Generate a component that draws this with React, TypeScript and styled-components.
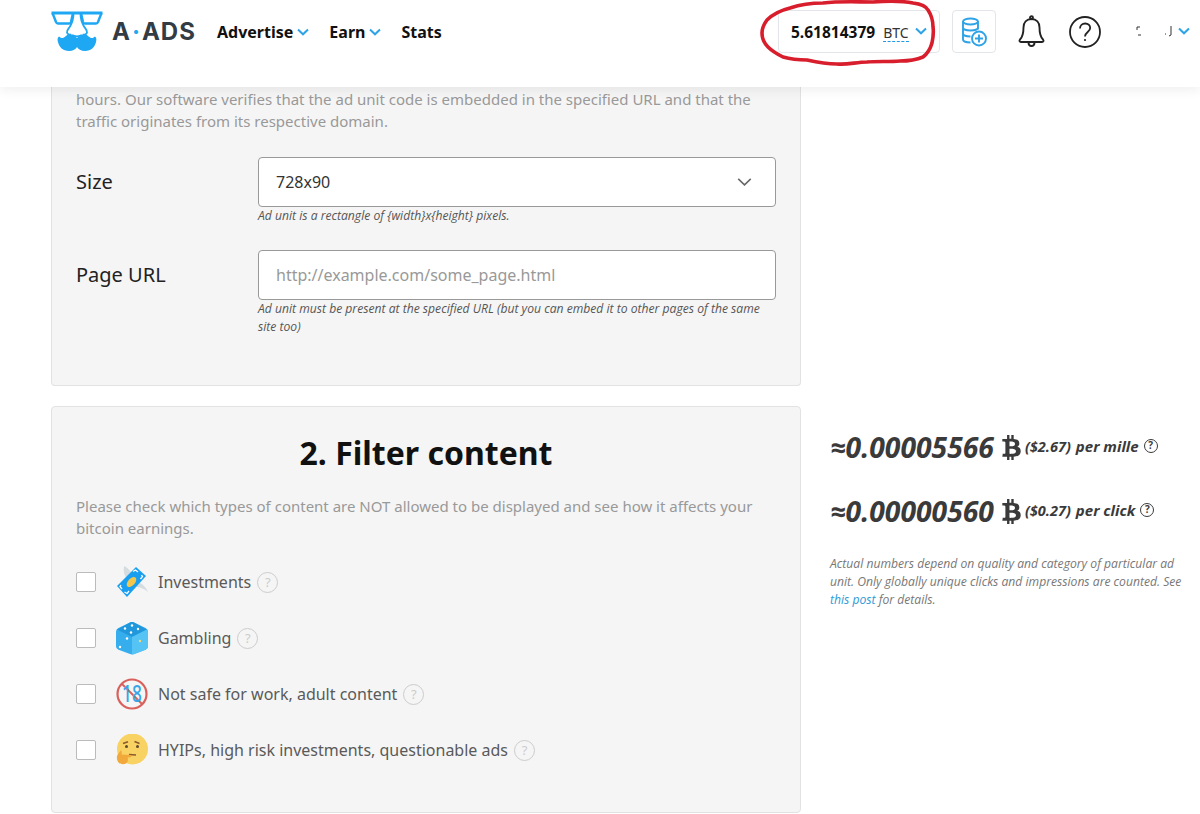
import React from "react";
import styled, { createGlobalStyle } from "styled-components";
import { FaBtc } from "react-icons/fa";

const Global = createGlobalStyle`
  html, body { margin: 0; padding: 0; background: #fff; }
  body { width: 1200px; height: 814px; overflow: hidden; font-family: "Noto Sans", "Open Sans", sans-serif; color: #222; }
  * { box-sizing: border-box; }
`;

const Header = styled.header`
  position: relative;
  z-index: 2;
  height: 87px;
  background: #fff;
  box-shadow: 0 2px 12px rgba(0, 0, 0, 0.08);
  display: flex;
  align-items: flex-start;
  padding: 10px 0 0 51px;
`;
const Logo = styled.a`
  display: flex;
  align-items: center;
  width: 166px;
  height: 42px;
  gap: 9px;
`;
const LogoText = styled.span`
  font-family: "Inter", sans-serif;
  font-weight: 700;
  font-size: 24px;
  letter-spacing: 1px;
  color: #333c44;
  white-space: nowrap;
  b { color: #1ea7f2; font-weight: 700; margin: 0 1px; }
`;
const Nav = styled.nav`
  display: flex;
  align-items: center;
  height: 44px;
  gap: 20px;
`;
const NavItem = styled.a`
  display: flex;
  align-items: center;
  gap: 4px;
  font-size: 16px;
  font-weight: 700;
  color: #111;
`;
const Right = styled.div`
  margin-left: auto;
  display: flex;
  align-items: center;
  height: 43px;
  padding-right: 10px;
`;
const Balance = styled.div`
  position: relative;
  width: 162px;
  height: 43px;
  border: 1px solid #e2e6ea;
  border-radius: 4px;
  display: flex;
  align-items: center;
  padding-left: 12px;
`;
const Amount = styled.span`
  font-size: 15.5px;
  font-weight: 700;
  color: #111;
`;
const Unit = styled.span`
  font-size: 14px;
  color: #333;
  margin-left: 8px;
  margin-top: 3px;
  line-height: 17px;
  border-bottom: 1px dashed #1e9be6;
`;
const BalanceChevron = styled.span`
  display: flex;
  margin-left: 6px;
  margin-top: -1px;
`;
const CoinButton = styled.div`
  width: 44px;
  height: 43px;
  margin-left: 12px;
  border: 1px solid #e2e6ea;
  border-radius: 4px;
  display: flex;
  align-items: center;
  justify-content: center;
`;
const Bell = styled.svg`
  margin-left: 22px;
  display: block;
`;
const Help = styled.svg`
  margin-left: 24px;
  display: block;
`;
const UserBox = styled.div`
  margin-left: 29px;
  width: 60px;
  display: flex;
  align-items: center;
  justify-content: flex-end;
  gap: 2px;
`;
const Scribble = styled.svg`
  position: absolute;
  left: -21px;
  top: -11px;
  pointer-events: none;
`;

const Main = styled.main`
  display: grid;
  grid-template-columns: 750px 340px;
  column-gap: 29px;
  row-gap: 20px;
  padding-left: 51px;
`;
const Card = styled.section<{ $cut?: boolean }>`
  background: #f5f5f5;
  border: 1px solid #e2e2e2;
  border-radius: ${(p) => (p.$cut ? "0 0 4px 4px" : "4px")};
  ${(p) => (p.$cut ? "border-top: 0;" : "")}
  padding: ${(p) => (p.$cut ? "1px 24px 0" : "24px 24px 0")};
  height: ${(p) => (p.$cut ? "299px" : "407px")};
`;
const Empty = styled.div``;
const Para = styled.p`
  margin: 0;
  font-size: 15px;
  line-height: 22px;
  color: #999;
`;
const FieldRow = styled.div<{ $top: number }>`
  display: grid;
  grid-template-columns: 182px 518px;
  margin-top: ${(p) => p.$top}px;
`;
const Label = styled.label`
  font-size: 20px;
  line-height: 50px;
  color: #222;
`;
const Control = styled.div`
  height: 50px;
  background: #fff;
  border: 1px solid #999;
  border-radius: 4px;
  display: flex;
  align-items: center;
  justify-content: space-between;
  padding: 0 23px 0 17px;
`;
const Value = styled.span<{ $ph?: boolean }>`
  font-size: 16px;
  color: ${(p) => (p.$ph ? "#999" : "#333")};
`;
const Hint = styled.div`
  font-size: 12.15px;
  line-height: 18px;
  font-style: italic;
  color: #555;
  font-family: "Open Sans", sans-serif;
`;
const Title = styled.h2`
  margin: 0 0 20px;
  text-align: center;
  font-size: 32px;
  line-height: 44px;
  font-weight: 700;
  color: #111;
`;
const Rows = styled.div`
  margin-top: 25px;
  display: flex;
  flex-direction: column;
  gap: 20px;
`;
const Row = styled.div`
  display: flex;
  align-items: center;
  height: 36px;
`;
const Box = styled.span`
  width: 20px;
  height: 20px;
  background: #fff;
  border: 1px solid #bbb;
  border-radius: 2px;
  margin-right: 20px;
  flex: none;
`;
const RowIcon = styled.svg`
  flex: none;
  margin-right: 10px;
  display: block;
`;
const RowLabel = styled.span`
  font-size: 16px;
  color: #5a5a5a;
`;
const Q = styled.span`
  width: 21px;
  height: 21px;
  margin-left: 6px;
  border: 1.5px solid #ccc;
  border-radius: 50%;
  font-size: 13px;
  line-height: 18px;
  text-align: center;
  color: #ccc;
`;
const Side = styled.aside`
  padding-top: 21px;
`;
const Metric = styled.div`
  display: flex;
  align-items: center;
  height: 40px;
  margin-bottom: 24px;
  font-style: italic;
  font-weight: 700;
  color: #3a3a3a;
  font-family: "Open Sans", sans-serif;
`;
const Big = styled.span`
  font-size: 28.3px;
  margin-right: 5px;
`;
const Usd = styled.span`
  font-size: 14.5px;
  margin: -2px 5px 0 1px;
`;
const Per = styled.span`
  font-size: 15px;
  margin: -2px 5px 0 0;
`;
const MiniQ = styled.span`
  width: 14px;
  height: 14px;
  margin-top: -2px;
  border: 1.5px solid #3a3a3a;
  border-radius: 50%;
  font-size: 10px;
  line-height: 11px;
  text-align: center;
  font-style: normal;
`;
const Note = styled.p`
  margin: 4px 0 0;
  width: 355px;
  font-family: "Open Sans", sans-serif;
  font-size: 12.15px;
  line-height: 18px;
  font-style: italic;
  color: #777;
  a { color: #2e9ad6; }
`;

const Chevron = ({ w = 12, c = "#2ea3e6", s = 2 }: { w?: number; c?: string; s?: number }) => (
  <svg width={w} height={w * 0.67} viewBox="0 0 12 8" fill="none">
    <path d="M1 1.5 6 6.3l5-4.8" stroke={c} strokeWidth={s} />
  </svg>
);

const LogoMark = () => (
  <svg width="52" height="41" viewBox="0 0 52 41" fill="none" style={{ flex: "none" }}>
    <g stroke="#1ea7f2" strokeLinejoin="round">
      <path d="M0.500 2h51" strokeWidth="3" />
      <path d="M1.500 2 5 11c.3 1 1 1.500 2 1.500h11c1 0 1.700-.5 2-1.500l2-9M50.500 2 47 11c-.3 1-1 1.500-2 1.500H34c-1 0-1.700-.5-2-1.500l-2-9" strokeWidth="2.400" />
      <path d="M22.500 3c0 6-1.500 9-3.500 12.500-1.300 2.200-3.500 3.500-3 6 .4 2 2.500 2.500 4.500 2M29.500 3c0 6 1.500 9 3.500 12.500 1.300 2.200 3.500 3.500 3 6-.4 2-2.500 2.500-4.500 2M21 24c2.500 1.700 7.500 1.700 10 0" strokeWidth="1.800" />
    </g>
    <path d="M26 27C22 24 18 22 15 25C13 27 10 28 9 26C7 25 6 28 7 31C8 36 12 40 18 40C22 40 25 38 26 36C27 38 30 40 34 40C40 40 44 36 45 31C46 28 45 25 43 26C42 28 39 27 37 25C34 22 30 24 26 27Z" fill="#1ea7f2" />
  </svg>
);

const Investments = () => (
  <RowIcon width="32" height="34" viewBox="0 0 32 34">
    <path d="M8 1c4 2 8 6 9 11l-6 2C8 10 7 6 8 1zM32 27c-3-3-8-5-12-5l1-5c5 1 9 5 11 10z" fill="#d5dde0" />
    <path d="M20 2 30 11 11 32 1 21z" fill="#1a9ff0" />
    <path d="M17 6.500l2.500-1.500 2.500 2M25.500 10l1 1.500-2 2.500M5 20l-1 1.500 2 2.500M8.500 27l2.500 1.500 2-2.500" stroke="#fff" strokeWidth="1.300" fill="none" />
    <ellipse cx="15.500" cy="17" rx="6" ry="3.500" transform="rotate(-48 15.500 17)" fill="#f3c64c" />
  </RowIcon>
);
const Dice = () => (
  <RowIcon width="32" height="34" viewBox="0 0 32 34">
    <path d="M14 1.500c1.300-.6 2.700-.6 4 0L29.500 7C31 7.700 32 9 32 11v14c0 1.800-1 3-2.500 3.800L18 33c-1.300.6-2.700.6-4 0L2.500 28.800C1 28 0 26.800 0 25V11c0-2 1-3.300 2.500-4z" fill="#36aeee" />
    <path d="M16 16 31 8.500 18 1.500c-1.300-.6-2.700-.6-4 0L1 8.500z" fill="#2198dc" />
    <path d="M16 16 31 8.500c.7.800 1 1.500 1 2.500v14c0 1.800-1 3-2.500 3.800L18 33.200 16 33.500z" fill="#56c3f5" />
    <g fill="#fff">
      <circle cx="16" cy="4.500" r="1.200" /><circle cx="9" cy="7.500" r="1.200" /><circle cx="22" cy="8" r="1.200" /><circle cx="15" cy="11.500" r="1.200" />
      <circle cx="4" cy="26" r="1.200" /><circle cx="11" cy="17.500" r="1.200" />
    </g>
    <circle cx="24" cy="20" r="1.200" fill="#f3d873" />
  </RowIcon>
);
const Adult = () => (
  <RowIcon width="32" height="32" viewBox="0 0 32 32">
    <circle cx="16" cy="16" r="14.500" fill="none" stroke="#d9605c" strokeWidth="2.200" />
    <path d="M6 6l20 20" stroke="#d9605c" strokeWidth="2" />
    <text x="0" y="0" transform="translate(16 24) scale(0.72 1)" textAnchor="middle" fontFamily="Noto Sans, sans-serif" fontSize="24" fontWeight="500" fill="#3aa5e6">18</text>
  </RowIcon>
);
const Thinking = () => (
  <RowIcon width="32" height="33" viewBox="0 0 32 33">
    <circle cx="16.500" cy="15" r="15.500" fill="#f9d264" />
    <path d="M7 9.500l5-1.800M18.500 7.500l5 2" stroke="#8a5a2b" strokeWidth="1.500" fill="none" />
    <circle cx="10.500" cy="12.500" r="1.500" fill="#5f4a2a" /><circle cx="21.500" cy="12.500" r="1.500" fill="#5f4a2a" />
    <path d="M13 20.500l7 .5" stroke="#8a5a2b" strokeWidth="1.500" />
    <path d="M1 22c1-3 3-4 4-6 1 2 1 3 .5 4.500l9 .5c1.500.2 1.500 2 0 2.200l-3 .3c1 1.200.5 5-1.500 6-2 1-5.500 1-7-.5C1.500 28 .5 25 1 22z" fill="#f2a93b" />
  </RowIcon>
);

export default function App() {
  return (
    <>
      <Global />
      <Header>
        <Logo>
          <LogoMark />
          <LogoText>A<b>·</b>ADS</LogoText>
        </Logo>
        <Nav>
          <NavItem>Advertise <Chevron /></NavItem>
          <NavItem>Earn <Chevron /></NavItem>
          <NavItem>Stats</NavItem>
        </Nav>
        <Right>
          <Balance>
            <Amount>5.61814379</Amount>
            <Unit>BTC</Unit>
            <BalanceChevron><Chevron /></BalanceChevron>
            <Scribble width="180" height="68" viewBox="0 0 180 68" fill="none">
              <path d="M32 8C44 4 52 3 65 3C82 1 98 2 115 2C130 1 145 1 155 3C163 4 168 6 170 10C174 16 175 21 175 27C176 33 175 38 174 43C172 50 169 54 165 57C158 60 150 61 142 61C131 62 120 61 109 62C98 62 90 65 79 64C68 64 58 62 49 60C40 60 32 59 25 57C19 54 14 51 10 47C6 43 4 38 4 33C4 28 6 24 9 20C15 14 24 10 32 8Z" stroke="#d81e2c" strokeWidth="3.600" strokeLinejoin="round" />
            </Scribble>
          </Balance>
          <CoinButton>
            <svg width="26" height="30" viewBox="0 0 26 30" fill="none" stroke="#2ea3e6" strokeWidth="1.900">
              <ellipse cx="9.500" cy="4.500" rx="7.500" ry="3" />
              <path d="M2 4.500v18c0 1.700 3.200 3 7.500 3M17 4.500v8M2 10.500c0 1.700 3.200 3 7.500 3s7.500-1.300 7.500-3M2 16.500c0 1.700 3.200 3 7.500 3" />
              <circle cx="18" cy="21.500" r="7" fill="#fff" />
              <path d="M18 17.500v8M14 21.500h8" />
            </svg>
          </CoinButton>
          <Bell width="27" height="33" viewBox="0 0 27 33" fill="none" stroke="#222" strokeWidth="1.900">
            <path d="M13.500 4c-5 0-8 3.500-8 8.500 0 6-1 9.500-3.500 12-1 1.200-.5 2.500 1 2.500h21c1.500 0 2-1.300 1-2.500-2.500-2.500-3.500-6-3.500-12C21.500 7.500 18.500 4 13.500 4z" />
            <circle cx="13.500" cy="2.800" r="1.500" />
            <path d="M10.500 27.500c0 2 1.300 3.500 3 3.500s3-1.500 3-3.500" />
          </Bell>
          <Help width="32" height="32" viewBox="0 0 32 32" fill="none" stroke="#222" strokeWidth="1.800">
            <circle cx="16" cy="16" r="15" />
            <path d="M11 12.500c0-3 2.300-5 5.200-5s5 1.900 5 4.500c0 4-5.200 4-5.200 8.500" />
            <circle cx="16" cy="24" r="1.100" fill="#222" stroke="none" />
          </Help>
          <UserBox>
            <svg width="42" height="14" viewBox="0 0 42 14" fill="none" stroke="#333" strokeWidth="1">
              <path d="M6 2H3v3M4 10h3M31 9h1M37 1v9l-2 1" />
            </svg>
            <Chevron />
          </UserBox>
        </Right>
      </Header>
      <Main>
        <Card $cut>
          <Para>
            hours. Our software verifies that the ad unit code is embedded in the specified URL and that the
            traffic originates from its respective domain.
          </Para>
          <FieldRow $top={25}>
            <Label>Size</Label>
            <div>
              <Control>
                <Value>728x90</Value>
                <Chevron w={15} c="#666" s={1.200} />
              </Control>
              <Hint>Ad unit is a rectangle of {"{width}x{height}"} pixels.</Hint>
            </div>
          </FieldRow>
          <FieldRow $top={25}>
            <Label>Page URL</Label>
            <div>
              <Control>
                <Value $ph>http://example.com/some_page.html</Value>
              </Control>
              <Hint>
                Ad unit must be present at the specified URL (but you can embed it to other pages of the same site too)
              </Hint>
            </div>
          </FieldRow>
        </Card>
        <Empty />
        <Card>
          <Title>2. Filter content</Title>
          <Para>
            Please check which types of content are NOT allowed to be displayed and see how it affects your bitcoin
            earnings.
          </Para>
          <Rows>
            <Row><Box /><Investments /><RowLabel>Investments</RowLabel><Q>?</Q></Row>
            <Row><Box /><Dice /><RowLabel>Gambling</RowLabel><Q>?</Q></Row>
            <Row><Box /><Adult /><RowLabel>Not safe for work, adult content</RowLabel><Q>?</Q></Row>
            <Row><Box /><Thinking /><RowLabel>HYIPs, high risk investments, questionable ads</RowLabel><Q>?</Q></Row>
          </Rows>
        </Card>
        <Side>
          <Metric>
            <Big>≈0.00005566</Big>
            <FaBtc size={25} />
            <Usd>($2.67)</Usd>
            <Per>per mille</Per>
            <MiniQ>?</MiniQ>
          </Metric>
          <Metric>
            <Big>≈0.00000560</Big>
            <FaBtc size={25} />
            <Usd>($0.27)</Usd>
            <Per>per click</Per>
            <MiniQ>?</MiniQ>
          </Metric>
          <Note>
            Actual numbers depend on quality and category of particular ad unit. Only globally unique clicks and
            impressions are counted. See <a>this post</a> for details.
          </Note>
        </Side>
      </Main>
    </>
  );
}
